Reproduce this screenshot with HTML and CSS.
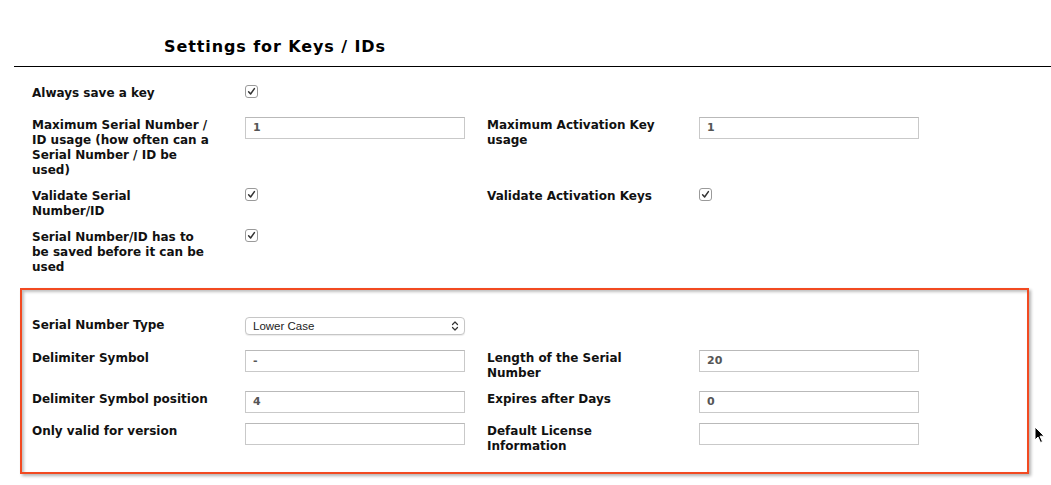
FILE: index.html
```html
<!DOCTYPE html>
<html>
<head>
<meta charset="utf-8">
<link rel="stylesheet" href="styles.css">
</head>
<body>
<div class="page">
  <h2 class="title">Settings for Keys / IDs</h2>
  <div class="rule"></div>

  <div class="rows">
    <div class="row">
      <div class="label">Always save a key</div>
      <div class="field"><svg class="check" viewBox="0 0 13 13" width="13" height="13"><rect x="0.5" y="0.5" width="12" height="12" rx="2.5" fill="#fff" stroke="#9a9a9a"/><path d="M3.6 6.8 L5.6 9 L9.4 3.6" fill="none" stroke="#333" stroke-width="1.5" stroke-linecap="round" stroke-linejoin="round"/></svg></div>
      <div class="label"></div>
      <div class="field"></div>
    </div>
    <div class="row">
      <div class="label">Maximum Serial Number / ID usage (how often can a Serial Number / ID be used)</div>
      <div class="field"><div class="input">1</div></div>
      <div class="label">Maximum Activation Key usage</div>
      <div class="field"><div class="input">1</div></div>
    </div>
    <div class="row">
      <div class="label">Validate Serial<br>Number/ID</div>
      <div class="field"><svg class="check" viewBox="0 0 13 13" width="13" height="13"><rect x="0.5" y="0.5" width="12" height="12" rx="2.5" fill="#fff" stroke="#9a9a9a"/><path d="M3.6 6.8 L5.6 9 L9.4 3.6" fill="none" stroke="#333" stroke-width="1.5" stroke-linecap="round" stroke-linejoin="round"/></svg></div>
      <div class="label">Validate Activation Keys</div>
      <div class="field"><svg class="check" viewBox="0 0 13 13" width="13" height="13"><rect x="0.5" y="0.5" width="12" height="12" rx="2.5" fill="#fff" stroke="#9a9a9a"/><path d="M3.6 6.8 L5.6 9 L9.4 3.6" fill="none" stroke="#333" stroke-width="1.5" stroke-linecap="round" stroke-linejoin="round"/></svg></div>
    </div>
    <div class="row">
      <div class="label">Serial Number/ID has to be saved before it can be used</div>
      <div class="field"><svg class="check" viewBox="0 0 13 13" width="13" height="13"><rect x="0.5" y="0.5" width="12" height="12" rx="2.5" fill="#fff" stroke="#9a9a9a"/><path d="M3.6 6.8 L5.6 9 L9.4 3.6" fill="none" stroke="#333" stroke-width="1.5" stroke-linecap="round" stroke-linejoin="round"/></svg></div>
      <div class="label"></div>
      <div class="field"></div>
    </div>
  </div>

  <div class="highlight">
    <div class="row">
      <div class="label">Serial Number Type</div>
      <div class="field"><div class="select"><span>Lower Case</span><svg class="arrows" viewBox="0 0 8 12" width="8" height="12"><path d="M1.5 4.5 L4 2 L6.5 4.5 M1.5 7.5 L4 10 L6.5 7.5" fill="none" stroke="#333" stroke-width="1.2" stroke-linecap="round" stroke-linejoin="round"/></svg></div></div>
      <div class="label"></div>
      <div class="field"></div>
    </div>
    <div class="row">
      <div class="label">Delimiter Symbol</div>
      <div class="field"><div class="input">-</div></div>
      <div class="label">Length of the Serial Number</div>
      <div class="field"><div class="input">20</div></div>
    </div>
    <div class="row">
      <div class="label">Delimiter Symbol position</div>
      <div class="field"><div class="input">4</div></div>
      <div class="label">Expires after Days</div>
      <div class="field"><div class="input">0</div></div>
    </div>
    <div class="row">
      <div class="label">Only valid for version</div>
      <div class="field"><div class="input"></div></div>
      <div class="label">Default License Information</div>
      <div class="field"><div class="input"></div></div>
    </div>
  </div>

  <svg class="cursor" viewBox="0 0 12 18" width="12" height="18"><path d="M1 1 L1 14 L4 11 L6.5 16.5 L8.5 15.6 L6 10.2 L10.2 10.2 Z" fill="#000" stroke="#fff" stroke-width="1" stroke-linejoin="round"/></svg>
</div>
</body>
</html>
```

FILE: styles.css
```css
html, body {
  margin: 0;
  padding: 0;
  background: #fff;
}

.page {
  position: relative;
  padding-left: 14px;
  height: 485px;
  box-sizing: border-box;
  font-family: "DejaVu Sans", Verdana, sans-serif;
  color: #000;
}

.title {
  margin: 0 0 0 150px;
  padding-top: 38px;
  font-size: 16px;
  line-height: 18px;
  font-weight: bold;
  letter-spacing: 0.9px;
}

.rule {
  margin-top: 10px;
  border-top: 1px solid #000;
}

.rows {
  padding: 18px 0 0 18px;
  display: flex;
  flex-direction: column;
  gap: 10px;
}

.row {
  display: grid;
  grid-template-columns: 213px 242px 212px 220px;
  min-height: 22px;
  align-items: start;
}

.label {
  width: 182px;
  padding-top: 1px;
  font-size: 12px;
  line-height: 15px;
  font-weight: bold;
  color: #111;
}

.field {
  display: flex;
}

.check {
  display: block;
}

.input {
  box-sizing: border-box;
  width: 220px;
  height: 22px;
  border: 1px solid #c9c9c9;
  border-top-color: #b9b9b9;
  background: #fff;
  padding-left: 7px;
  font-size: 11px;
  line-height: 20px;
  font-weight: bold;
  color: #555;
}

.select {
  box-sizing: border-box;
  width: 220px;
  height: 18px;
  border: 1px solid #c6c6c6;
  border-radius: 4px;
  background: #fff;
  display: flex;
  align-items: center;
  justify-content: space-between;
  padding: 0 5px 0 7px;
  font-family: "Liberation Sans", Arial, sans-serif;
  font-size: 11.5px;
  color: #222;
  box-shadow: 0 1px 1px rgba(0,0,0,0.08);
}

.arrows {
  display: block;
}

.highlight {
  margin: 13px 0 0 6px;
  width: 1009px;
  height: 186px;
  box-sizing: border-box;
  border: 2px solid #f24a21;
  padding: 27px 0 0 10px;
  display: flex;
  flex-direction: column;
  gap: 10px;
  box-shadow: 2px 2px 3px rgba(0,0,0,0.3), inset 2px 2px 3px rgba(0,0,0,0.25);
}

.highlight .row:first-child {
  margin-bottom: 1px;
}

.cursor {
  position: absolute;
  left: 1034px;
  top: 426px;
}
```
